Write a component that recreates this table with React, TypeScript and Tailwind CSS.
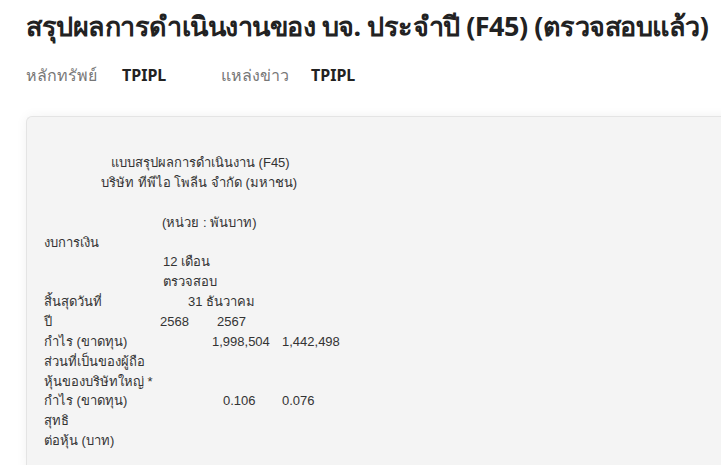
import React from 'react';

const Row = ({ cells }: { cells: [number, string][] }) => (
  <div className="flex h-[19.86px] items-center whitespace-pre">
    {cells.map(([w, t], i) => (
      <span key={i} className="shrink-0" style={{ width: w }}>
        {t}
      </span>
    ))}
  </div>
);

export default function App() {
  const rows: [number, string][][] = [
    [[67, ''], [300, 'แบบสรุปผลการดำเนินงาน (F45)']],
    [[57, ''], [300, 'บริษัท ทีพีไอ โพลีน จำกัด (มหาชน)']],
    [],
    [[118, ''], [200, '(หน่วย : พันบาท)']],
    [[300, 'งบการเงิน']],
    [[119, ''], [200, '12 เดือน']],
    [[119, ''], [200, 'ตรวจสอบ']],
    [[144, 'สิ้นสุดวันที่'], [200, '31 ธันวาคม']],
    [[116, 'ปี'], [57, '2568'], [100, '2567']],
    [[168, 'กำไร (ขาดทุน)'], [70, '1,998,504'], [100, '1,442,498']],
    [[300, 'ส่วนที่เป็นของผู้ถือ']],
    [[300, 'หุ้นของบริษัทใหญ่ *']],
    [[179, 'กำไร (ขาดทุน)'], [59, '0.106'], [100, '0.076']],
    [[300, 'สุทธิ']],
    [[300, 'ต่อหุ้น (บาท)']],
  ];
  return (
    <div className="min-h-screen overflow-hidden bg-white pl-[26px] pt-[6px] font-['Noto_Sans',sans-serif] text-[#222]">
      <h1 className="text-[27px] font-bold leading-[40px] tracking-[-0.5px] whitespace-nowrap">
        สรุปผลการดำเนินงานของ บจ. ประจำปี (F45) (ตรวจสอบแล้ว)
      </h1>
      <div className="mt-[17px] flex items-center text-[16px] leading-[24px]">
        <span className="w-[96px] text-[#777]">หลักทรัพย์</span>
        <span className="w-[99px] font-bold text-[#222]">TPIPL</span>
        <span className="w-[90px] text-[#777]">แหล่งข่าว</span>
        <span className="font-bold text-[#222]">TPIPL</span>
      </div>
      <div className="mt-[29px] -mr-[20px] rounded-tl-[6px] border-t border-l border-[#e4e4e4] bg-[#f4f4f4] pl-[17px] pt-[36px] pb-[20px] text-[13px] text-[#333] shadow-[0_0_12px_rgba(0,0,0,0.06)] font-['Liberation_Sans',sans-serif]">
        {rows.map((r, i) => (
          <Row key={i} cells={r} />
        ))}
      </div>
    </div>
  );
}
